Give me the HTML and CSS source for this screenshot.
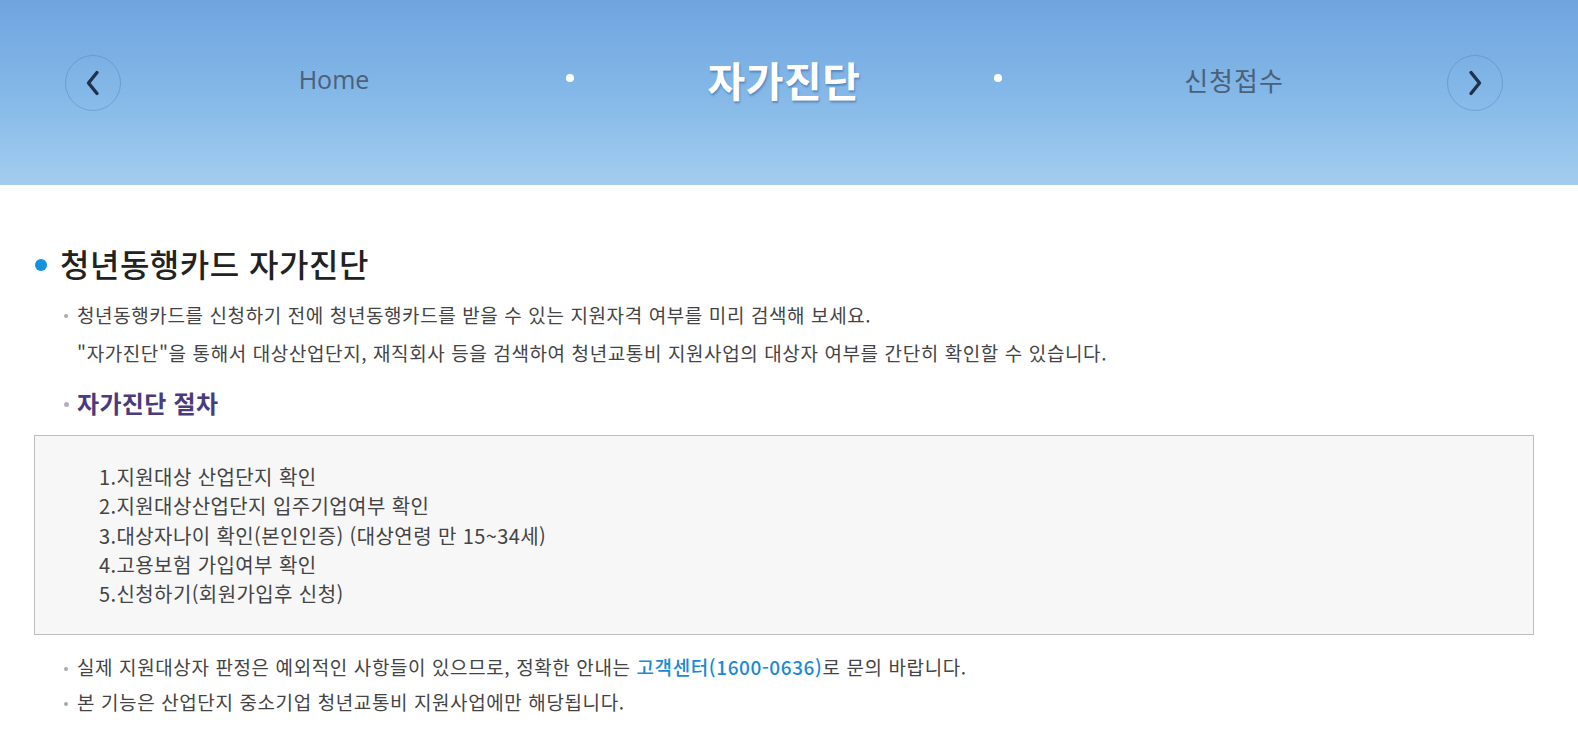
FILE: index.html
```html
<!DOCTYPE html>
<html lang="ko">

<head>
  <meta charset="UTF-8">
  <meta name="viewport" content="width=device-width, initial-scale=1.0">
  <title>자가진단</title>

  <link rel="stylesheet" href="styles.css">

</head>

<body>
  <div class="top">
    <ul class="nav">
      <li class="arrow">
        <svg width="16" height="26" viewBox="0 0 16 26"><path d="M12 2.5 L3.5 13 L12 23.5" fill="none" stroke="#1f324d" stroke-width="3.4" stroke-linecap="round" stroke-linejoin="round"/></svg>
      </li>
      <li class="page side">Home</li>
      <li class="dot"><span></span></li>
      <li class="page now">자가진단</li>
      <li class="dot"><span></span></li>
      <li class="page side right">신청접수</li>
      <li class="arrow">
        <svg width="16" height="26" viewBox="0 0 16 26"><path d="M4 2.5 L12.5 13 L4 23.5" fill="none" stroke="#1f324d" stroke-width="3.4" stroke-linecap="round" stroke-linejoin="round"/></svg>
      </li>
    </ul>
  </div>

  <div class="content">
    <h2 class="tit">청년동행카드 자가진단</h2>
    <ul class="info">
      <li>청년동행카드를 신청하기 전에 청년동행카드를 받을 수 있는 지원자격 여부를 미리 검색해 보세요.</li>
      <li class="nodot">"자가진단"을 통해서 대상산업단지, 재직회사 등을 검색하여 청년교통비 지원사업의 대상자 여부를 간단히 확인할 수 있습니다.</li>
    </ul>

    <h3 class="sub">자가진단 절차</h3>
    <div class="box">
      <p>1.지원대상 산업단지 확인</p>
      <p>2.지원대상산업단지 입주기업여부 확인</p>
      <p>3.대상자나이 확인(본인인증) (대상연령 만 15~34세)</p>
      <p>4.고용보험 가입여부 확인</p>
      <p>5.신청하기(회원가입후 신청)</p>
    </div>

    <ul class="info bottom">
      <li>실제 지원대상자 판정은 예외적인 사항들이 있으므로, 정확한 안내는 <a href="#">고객센터(1600-0636)</a>로 문의 바랍니다.</li>
      <li>본 기능은 산업단지 중소기업 청년교통비 지원사업에만 해당됩니다.</li>
    </ul>
  </div>
</body>

</html>
```

FILE: styles.css
```css
body {
  margin: 0;
  font-family: "Noto Sans CJK KR", "Noto Sans", sans-serif;
  color: #333;
  background: #fff;
}

ul {
  margin: 0;
  padding: 0;
  list-style: none;
}

/* 상단 네비 */
.top {
  height: 185px;
  background: linear-gradient(to bottom, #6fa4e0 0%, #84b8e8 50%, #a3cdef 100%);
  padding-top: 55px;
  box-sizing: border-box;
}

.nav {
  display: flex;
  align-items: center;
  height: 56px;
  padding-left: 65px;
}

.arrow {
  width: 56px;
  height: 56px;
  border: 1px solid rgba(70, 110, 170, 0.35);
  border-radius: 50%;
  box-sizing: border-box;
  display: flex;
  align-items: center;
  justify-content: center;
}

.page {
  text-align: center;
  margin-top: -8px;
}

.side {
  width: 426px;
  font-size: 25px;
  color: #4b6079;
  font-family: "Open Sans", "Noto Sans CJK KR", sans-serif;
}

.side.right {
  font-family: "Noto Sans CJK KR", sans-serif;
  font-size: 26px;
  letter-spacing: 1px;
}

.now {
  width: 382px;
  font-size: 41px;
  font-weight: bold;
  letter-spacing: 0.5px;
  color: #fff;
  text-shadow: 1px 2px 2px rgba(40, 80, 140, 0.45);
}

.dot {
  width: 46px;
  display: flex;
  justify-content: center;
  margin-top: -10px;
}

.dot span {
  width: 8px;
  height: 8px;
  border-radius: 50%;
  background: #fff;
}

/* 본문 */
.content {
  padding: 50px 44px 30px 34px;
}

.tit {
  position: relative;
  margin: 0 0 5px;
  padding-left: 26px;
  font-size: 32px;
  font-weight: 500;
  letter-spacing: 0.5px;
  color: #222;
  line-height: 56px;
}

.tit:before {
  content: "";
  position: absolute;
  left: 1px;
  top: 24px;
  width: 12px;
  height: 12px;
  border-radius: 50%;
  background: #1592de;
}

.info {
  padding-left: 43px;
}

.info li {
  position: relative;
  font-size: 19px;
  letter-spacing: 0.6px;
  line-height: 38px;
  color: #444;
}

.info li:before {
  content: "";
  position: absolute;
  left: -13px;
  top: 18px;
  width: 4px;
  height: 4px;
  border-radius: 50%;
  background: #aaa;
}

.info li.nodot:before {
  display: none;
}

.info a {
  color: #1a8ad2;
  text-decoration: none;
  font-weight: 500;
}

.sub {
  position: relative;
  margin: 14px 0 15px;
  padding-left: 43px;
  font-size: 24px;
  font-weight: bold;
  letter-spacing: 0.3px;
  color: #4a3c7c;
  line-height: 34px;
}

.sub:before {
  content: "";
  position: absolute;
  left: 30px;
  top: 16px;
  width: 5px;
  height: 5px;
  border-radius: 50%;
  background: #b3acc8;
}

.box {
  border: 1px solid #bdbdbd;
  background: #f7f7f7;
  padding: 26px 0 26px 64px;
}

.box p {
  margin: 0;
  font-size: 20px;
  letter-spacing: 0.4px;
  line-height: 29.3px;
  color: #444;
}

.bottom {
  margin-top: 14px;
}

.bottom li {
  line-height: 35px;
}
```
